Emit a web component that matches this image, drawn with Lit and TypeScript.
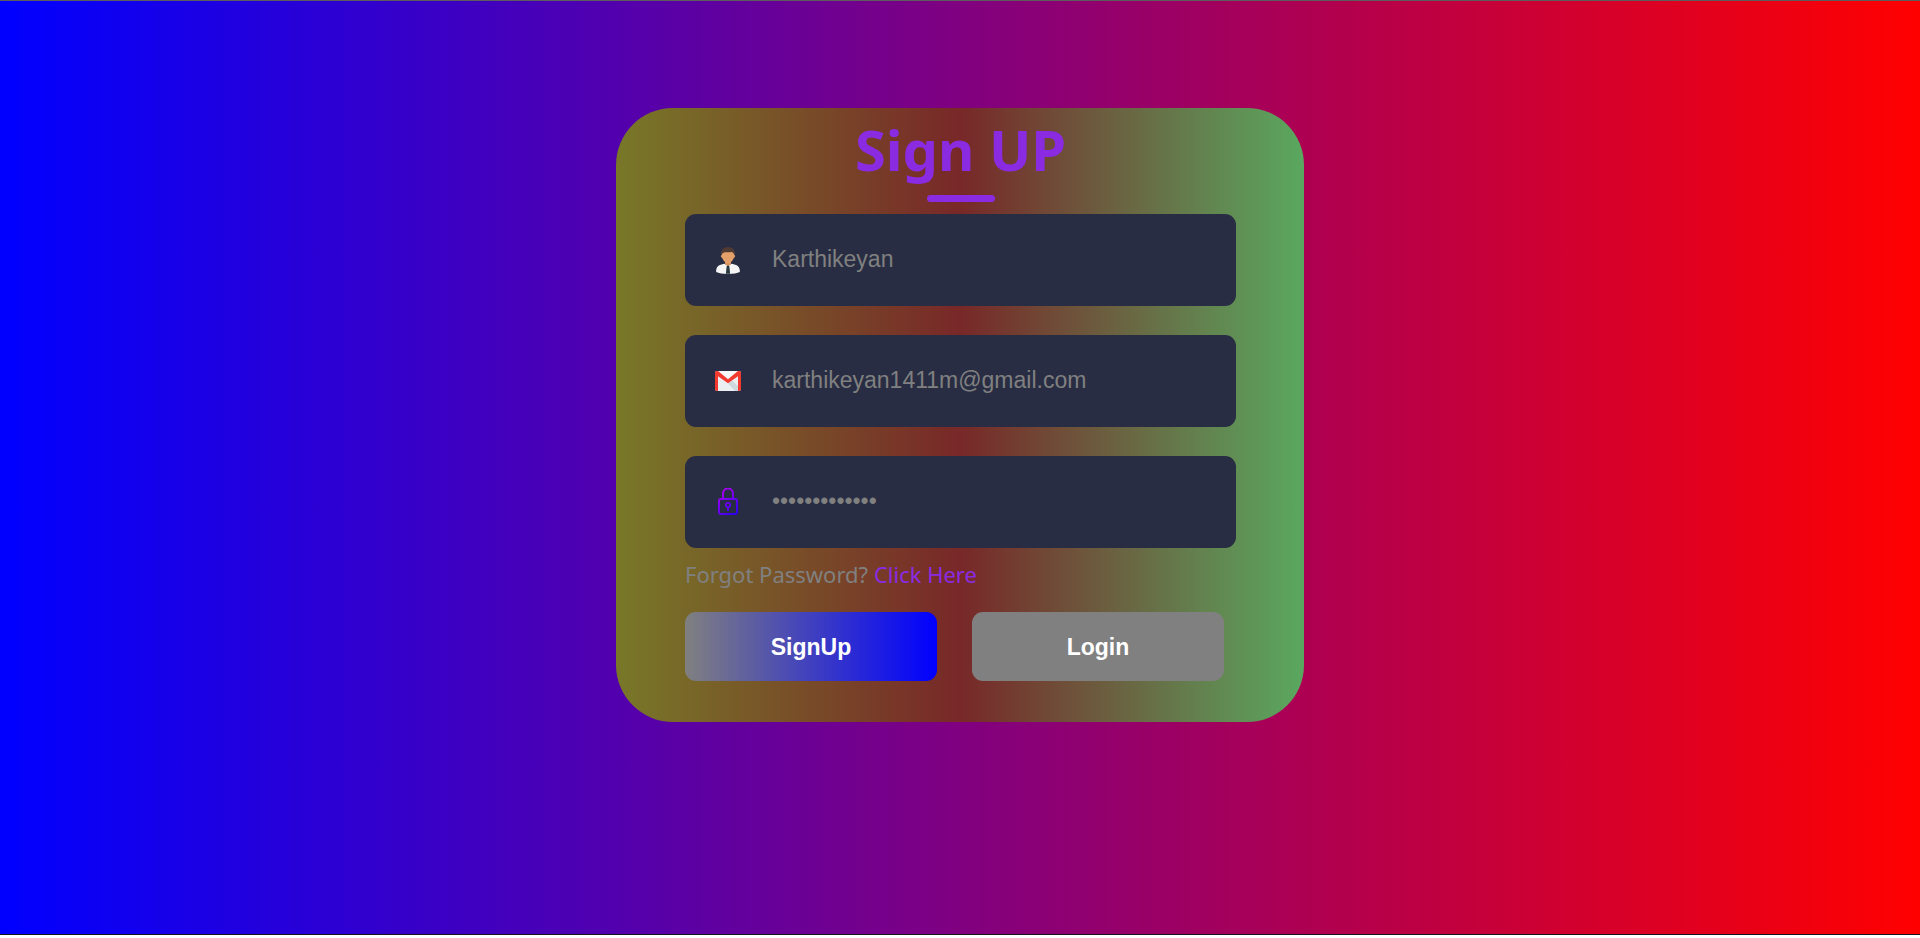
import { LitElement, html, css, svg } from "lit";
import { customElement } from "lit/decorators.js";

const personIcon = svg`
  <svg class="icon" viewBox="0 0 28 28" aria-hidden="true">
    <path d="M2.200 26c-.4-5 2.400-7.300 8-8.200l3.800 1.700 3.800-1.700c5.600.9 8.400 3.200 8 8.200-4.500 2.600-19.100 2.600-23.600 0z" fill="#f5f5f5"/>
    <path d="M11 13h6v5l-3 2.500-3-2.500z" fill="#d8935a"/>
    <path d="M7.800 6.500c0-3 2.500-4.500 6.200-4.500s6.200 1.500 6.200 4.500v2.600c1.300.1 1.100 2.200-.2 2.500-.8 2.600-3.600 6-6 6s-5.200-3.400-6-6c-1.300-.3-1.500-2.400-.2-2.500z" fill="#e3a06a"/>
    <path d="M7.800 9C6.700 4 9.300 1 14 .9c4.700.1 7.300 3.100 6.200 8.100-.5-1.900-1.400-2.900-3-2.900-2.600.7-5.400-.3-6.900.5-1.300.4-2.100 1-2.500 2.400z" fill="#503a32"/>
    <path d="M12.800 19.700h2.400l.3 2 .6 6.100h-4.200l.6-6.100z" fill="#28363f"/>
  </svg>`;

const mailIcon = svg`
  <svg class="icon" viewBox="0 0 28 28" aria-hidden="true">
    <rect x="1" y="4" width="26" height="20" rx="2" fill="#eceff1"/>
    <path d="M14 16.500 18 13.500 24 19v5h-3z" fill="#cfd8dc"/>
    <path d="M4 4h20L14 11.500z" fill="#f8fafb"/>
    <path d="M1 6c0-1.200.9-2 2-2h1l10 8.200L24 4h1c1.100 0 2 .8 2 2v16c0 1.200-.8 2-2 2h-1V9.300l-10 7-10-7V24H3c-1.200 0-2-.8-2-2z" fill="#f4392f"/>
  </svg>`;

const lockIcon = svg`
  <svg class="icon" viewBox="0 0 28 28" aria-hidden="true">
    <defs>
      <linearGradient id="lock-ink" gradientUnits="userSpaceOnUse" x1="5" y1="2" x2="24" y2="25">
        <stop offset="0" stop-color="#b400f0"/>
        <stop offset="1" stop-color="#2a00f0"/>
      </linearGradient>
    </defs>
    <g fill="none" stroke="url(#lock-ink)" stroke-width="2">
      <rect x="5" y="11" width="18" height="15" rx="2"/>
      <path d="M9 11V5.500a5 5 0 0 1 10 0V11"/>
      <circle cx="14" cy="17" r="2.200" stroke-width="1.800"/>
      <path d="M13 19h2v4h-2z" fill="url(#lock-ink)" stroke="none"/>
    </g>
  </svg>`;

@customElement("app-root")
export class AppRoot extends LitElement {
  static styles = css`
    :host {
      display: block;
      box-sizing: border-box;
      min-height: 100vh;
      padding-bottom: 3px;
      background: #fff;
      font-family: "Noto Sans", "Open Sans", sans-serif;
    }
    .page {
      box-sizing: border-box;
      min-height: calc(100vh - 3px);
      padding: 107px 24px;
      border-top: 1px solid #5c5c5c;
      border-bottom: 1px solid #14141c;
      background: linear-gradient(to right, blue, purple, red) padding-box;
    }
    .card {
      box-sizing: border-box;
      max-width: 688px;
      margin: 0 auto;
      padding: 3px 68px 41px 69px;
      border-radius: 57px;
      background: linear-gradient(to right, #787828, #782828, #5aa85f);
    }
    h1 {
      margin: 0;
      color: blueviolet;
      font-size: 56px;
      line-height: 76px;
      font-weight: 700;
      text-align: center;
    }
    .rule {
      width: 68px;
      height: 7px;
      margin: 8px auto 12px;
      border-radius: 4px;
      background: blueviolet;
    }
    .fields {
      display: grid;
      gap: 29px;
    }
    .field {
      display: flex;
      align-items: center;
      gap: 30px;
      height: 92px;
      padding: 0 29px;
      border-radius: 11px;
      background: #282d43;
    }
    .icon {
      flex: none;
      width: 28px;
      height: 28px;
    }
    input {
      flex: 1;
      min-width: 0;
      padding: 0 0 2px;
      border: 0;
      outline: 0;
      background: transparent;
      color: gray;
      font: 23px/28px "Liberation Sans", Arial, sans-serif;
    }
    .forgot {
      margin: 11px 0 0;
      color: gray;
      font-size: 22px;
      line-height: 30px;
    }
    a {
      color: blueviolet;
      text-decoration: none;
    }
    .actions {
      display: flex;
      gap: 35px;
      margin-top: 23px;
      padding-right: 12px;
    }
    button {
      flex: 1;
      height: 69px;
      padding: 0;
      border: 0;
      border-radius: 11px;
      background: gray;
      color: #fff;
      font: bold 23px/28px "Liberation Sans", Arial, sans-serif;
    }
    .primary {
      background: linear-gradient(to right, gray, blue);
    }
  `;

  render() {
    return html`
      <main class="page">
        <form class="card" @submit=${(e: Event) => e.preventDefault()}>
          <h1>Sign UP</h1>
          <div class="rule"></div>
          <div class="fields">
            <label class="field">${personIcon}
              <input type="text" aria-label="Name" .value=${"Karthikeyan"} />
            </label>
            <label class="field">${mailIcon}
              <input type="email" aria-label="Email" .value=${"karthikeyan1411m@gmail.com"} />
            </label>
            <label class="field">${lockIcon}
              <input type="password" aria-label="Password" .value=${"karthikeyan14"} />
            </label>
          </div>
          <p class="forgot">Forgot Password? <a href="#">Click Here</a></p>
          <div class="actions">
            <button class="primary" type="submit">SignUp</button>
            <button type="button">Login</button>
          </div>
        </form>
      </main>
    `;
  }
}
